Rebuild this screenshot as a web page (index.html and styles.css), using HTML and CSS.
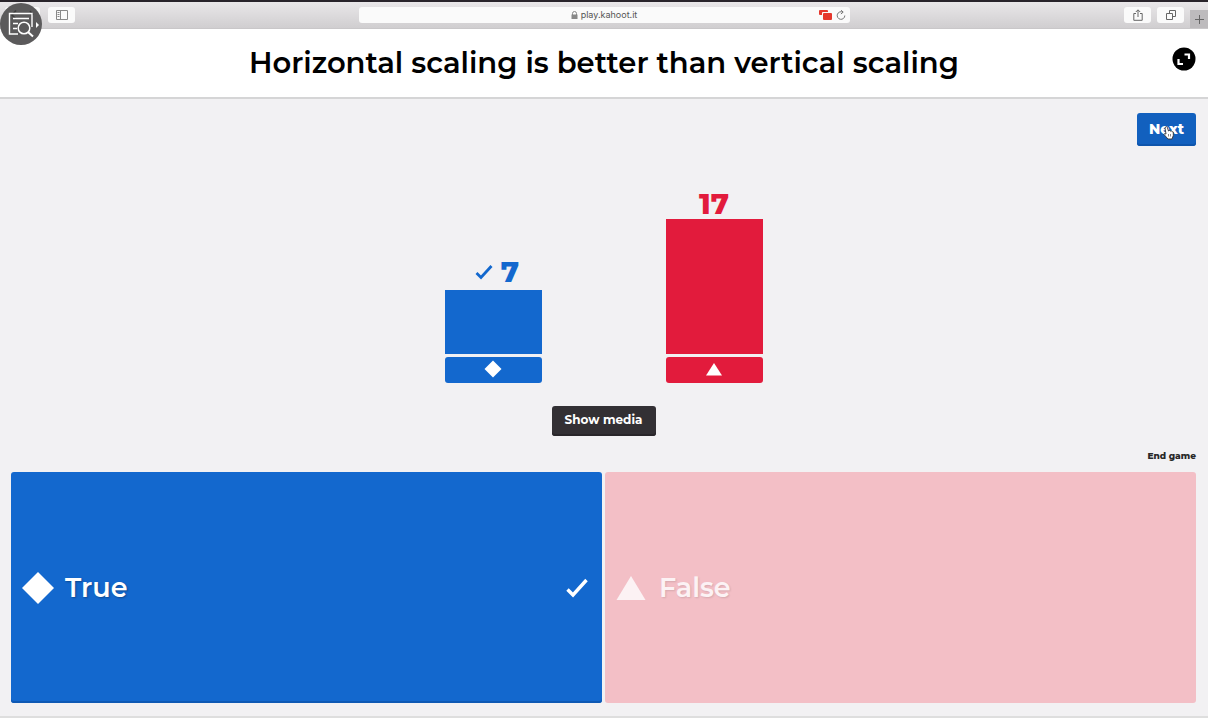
FILE: index.html
```html
<!DOCTYPE html>
<html lang="en">
<head>
<meta charset="utf-8">
<meta name="viewport" content="width=device-width, initial-scale=1">
<title>Kahoot</title>
<link rel="stylesheet" href="styles.css">
</head>
<body>
<div class="browser">
  <div class="tools tools-left">
    <div class="nav-pair"><button class="tool" aria-label="Back"></button><button class="tool" aria-label="Forward"></button></div>
    <button class="tool" aria-label="Sidebar"><svg width="12" height="10" viewBox="0 0 12 10"><path d="M.5.5h11v9H.5zM4.5.5v9M1.500 2.500h2M1.500 4.500h2M1.500 6.500h2" fill="none" stroke="#888"/></svg></button>
  </div>
  <div class="address">
    <span class="url"><svg width="7" height="8" viewBox="0 0 7 8"><path d="M1.500 4V2.500a2 2 0 0 1 4 0V4" fill="none" stroke="#888"/><path d="M.5 3.500h6V8h-6z" fill="#888"/></svg>play.kahoot.it</span>
    <span class="address-icons">
      <svg width="13" height="10" viewBox="0 0 13 10"><path d="M1 0h7q1 0 1 1v1H4Q3 2 3 3v2H1Q0 5 0 4V1Q0 0 1 0z" fill="#e5372c"/><path d="M5 3h7q1 0 1 1v5q0 1-1 1H5Q4 10 4 9V4q0-1 1-1z" fill="#e5372c"/></svg>
      <svg width="10" height="10" viewBox="0 0 10 10"><path d="M7 2.300A3.800 3.800 0 1 0 8.800 5.500M5 .2l2.200 1.900L4.900 4" fill="none" stroke="#777"/></svg>
    </span>
  </div>
  <div class="tools tools-right">
    <button class="tool" aria-label="Share"><svg width="10" height="12" viewBox="0 0 10 12"><path d="M3 4.500H.8v6.800h8.400V4.500H7M5 8V1M2.800 3 5 .8 7.200 3" fill="none" stroke="#666"/></svg></button>
    <button class="tool" aria-label="Tabs"><svg width="10" height="10" viewBox="0 0 10 10"><path d="M.5 3.500h6v6h-6zM3.500 3V.5h6v6H7" fill="none" stroke="#666"/></svg></button>
    <button class="new-tab" aria-label="New tab"><svg width="9" height="9" viewBox="0 0 9 9"><path d="M4.500 0v9M0 4.500h9" stroke="#666"/></svg></button>
  </div>
  <button class="lens" aria-label="Search page"><svg width="42" height="42" viewBox="0 0 42 42"><path d="M16 7.500 12 12l4 4M30 8l3 4" fill="none" stroke="#3c3b3c" stroke-width="1.500"/><path d="M18 31H9.500V10.500h22.500V24M13 15.500h16M13 20.500h5M13 25.500h4" fill="none" stroke="#fff" stroke-width="1.400"/><circle cx="24" cy="25" r="5.800" fill="none" stroke="#fff" stroke-width="1.500"/><path d="m28 29 5 4.500" stroke="#fff" stroke-width="2"/><path d="M36 19v6l3-3z" fill="#fff"/></svg></button>
</div>
<header class="question">
  <h1>Horizontal scaling is better than vertical scaling</h1>
  <button class="expand" aria-label="Fullscreen"><svg width="24" height="24" viewBox="0 0 24 24"><circle cx="12" cy="12" r="11.500" fill="#000"/><path d="M12.500 7.500h4.500V12M6.500 12v5H11" fill="none" stroke="#fff" stroke-width="2.200"/></svg></button>
</header>
<main class="game">
  <div class="actions">
    <button class="next">Next<svg class="pointer" width="11" height="14" viewBox="0 0 11 14"><path d="M2.500 1q1-1 1.800.3L5.500 5l1-.5 1 .6 1-.2.8.9 1 .2v3.500L9 13H5L1 8.500q0-1.500 2-.5L2 2z" fill="#fff" stroke="#333" stroke-width=".9"/><path d="M5.500 8v2.500M7.500 8v2.500" stroke="#555" stroke-width=".7"/></svg></button>
  </div>
  <section class="chart" aria-label="Results">
    <div class="result blue">
      <div class="count"><svg width="18" height="16" viewBox="0 0 18 16"><path d="m1.500 9 4.500 4.500L16.500 2" fill="none" stroke="currentColor" stroke-width="2.800"/></svg>7</div>
      <div class="bar" style="height:64px"></div>
      <div class="base"><svg width="18" height="18" viewBox="0 0 18 18"><path d="m9 .5 8.500 8.500L9 17.500.5 9z" fill="#fff"/></svg></div>
    </div>
    <div class="result red">
      <div class="count">17</div>
      <div class="bar" style="height:135px"></div>
      <div class="base"><svg width="16" height="14" viewBox="0 0 16 14"><path d="m8 1 8 12.500H0z" fill="#fff"/></svg></div>
    </div>
  </section>
  <button class="media">Show media</button>
  <a class="end" href="#">End game</a>
  <section class="answers">
    <button class="answer blue"><svg width="32" height="32" viewBox="0 0 32 32"><path d="m16 0 16 16-16 16L0 16z" fill="#fff"/></svg><span>True</span><svg class="tick" width="22" height="20" viewBox="0 0 22 20"><path d="m1.500 11.500 5.500 5.500L20.500 2" fill="none" stroke="#fff" stroke-width="3.400"/></svg></button>
    <button class="answer faded"><svg width="30" height="24" viewBox="0 0 30 24"><path d="m15 0 14.500 24H.5z" fill="#fff"/></svg><span>False</span></button>
  </section>
</main>
</body>
</html>
```
FILE: styles.css
```css
* { box-sizing: border-box; }
body {
  margin: 0;
  min-height: 100vh;
  display: flex;
  flex-direction: column;
  background: #fff;
  color: #000;
  font-family: Montserrat, Inter, "Open Sans", sans-serif;
}
button { border: 0; padding: 0; font: inherit; color: inherit; cursor: pointer; }
svg { display: block; flex: none; }
h1 { margin: 0; }

.browser {
  position: relative;
  display: grid;
  grid-template-columns: 1fr minmax(0, 491px) 1fr;
  align-items: center;
  height: 29px;
  border-top: 2px solid #29242b;
  border-bottom: 1px solid #c9c7c9;
  background: linear-gradient(#e9e7e9, #d0ced0);
}
.tools { display: flex; align-items: center; gap: 6px; }
.tools-left { padding-left: 5px; gap: 8px; }
.nav-pair { display: flex; gap: 1px; }
.nav-pair .tool { width: 17px; }
.tools-right { justify-content: flex-end; align-self: stretch; }
.tool {
  display: flex;
  align-items: center;
  justify-content: center;
  width: 27px;
  height: 16px;
  border-radius: 3px;
  background: #fafafa;
}
.new-tab {
  display: flex;
  align-items: center;
  justify-content: center;
  align-self: flex-end;
  width: 18px;
  height: 18px;
  background: #bdbbbd;
}
.address {
  display: grid;
  grid-template-columns: 1fr auto 1fr;
  align-items: center;
  height: 16px;
  padding: 0 4px;
  border-radius: 3px;
  background: #fafafa;
  color: #555;
  font-family: Inter, sans-serif;
  font-size: 9px;
  line-height: 16px;
}
.url { grid-column: 2; display: flex; align-items: center; gap: 3px; }
.address-icons { display: flex; justify-content: flex-end; align-items: center; gap: 4px; }
.lens {
  position: absolute;
  top: 1px;
  left: 0;
  width: 42px;
  height: 42px;
  border-radius: 50%;
  background: #5b5a5b;
}

.question {
  display: grid;
  grid-template-columns: 24px 1fr 24px;
  align-items: center;
  padding: 14px 12px;
  min-height: 70px;
  border-bottom: 2px solid #d5d5d6;
}
.question h1 {
  grid-column: 2;
  text-align: center;
  font-size: 29px;
  line-height: 40px;
  font-weight: 600;
}
.expand { width: 24px; height: 24px; border-radius: 50%; background: none; align-self: start; margin-top: 4px; }

.game {
  flex: 1;
  display: flex;
  flex-direction: column;
  padding: 14px 12px 13px 11px;
  margin-bottom: 6px;
  border-bottom: 2px solid #dedede;
  background: #f2f1f3;
}
.actions { display: flex; justify-content: flex-end; }
.next {
  position: relative;
  width: 59px;
  height: 33px;
  padding-bottom: 2px;
  border-radius: 3px;
  background: #1260be;
  box-shadow: inset 0 -2px #0e55ac;
  color: #fff;
  font-size: 14px;
  line-height: 20px;
  font-weight: 800;
}
.pointer { position: absolute; left: 26px; top: 13px; }

.chart {
  display: flex;
  justify-content: center;
  align-items: flex-end;
  gap: 124px;
  margin-top: 43px;
}
.result { display: flex; flex-direction: column; align-items: center; width: 97px; }
.count {
  display: flex;
  align-items: center;
  justify-content: center;
  gap: 8px;
  font-size: 29px;
  line-height: 30px;
  font-weight: 800;
}
.result.blue .count { padding: 0 0 3px 8px; }
.result.blue { color: #1368ce; }
.result.red { color: #e21b3c; }
.bar { width: 100%; background: currentColor; }
.base {
  display: flex;
  align-items: center;
  justify-content: center;
  width: 100%;
  height: 26px;
  margin-top: 3px;
  border-radius: 3px;
  padding-bottom: 2px;
  background: currentColor;
}
.media {
  align-self: center;
  width: 104px;
  height: 30px;
  margin-top: 23px;
  padding-bottom: 3px;
  border-radius: 3px;
  background: #333034;
  box-shadow: inset 0 -2px #29262a;
  color: #fff;
  font-size: 12px;
  line-height: 16px;
  font-weight: 700;
}
.end {
  align-self: flex-end;
  margin-top: 12px;
  color: #292929;
  font-size: 9px;
  line-height: 16px;
  font-weight: 800;
  text-decoration: none;
}
.answers { flex: 1; display: grid; grid-template-columns: 1fr 1fr; gap: 3px; margin-top: 8px; }
.answer {
  display: flex;
  align-items: center;
  gap: 11px;
  min-height: 120px;
  padding: 0 14px 0 11px;
  border-radius: 3px;
  color: #fff;
  font-size: 27px;
  line-height: 36px;
  font-weight: 600;
  text-align: left;
  text-shadow: 1px 1px 2px rgba(0, 0, 0, .3);
}
.answer.blue { background: #1368ce; box-shadow: inset 0 -2px #0f59b4; }
.answer.faded { background: #f3bfc6; gap: 13px; color: #fcf2f4; text-shadow: 1px 1px 2px rgba(0, 0, 0, .12); }
.answer.faded path { fill: #fcf2f4; }
.tick { margin-left: auto; }
```
